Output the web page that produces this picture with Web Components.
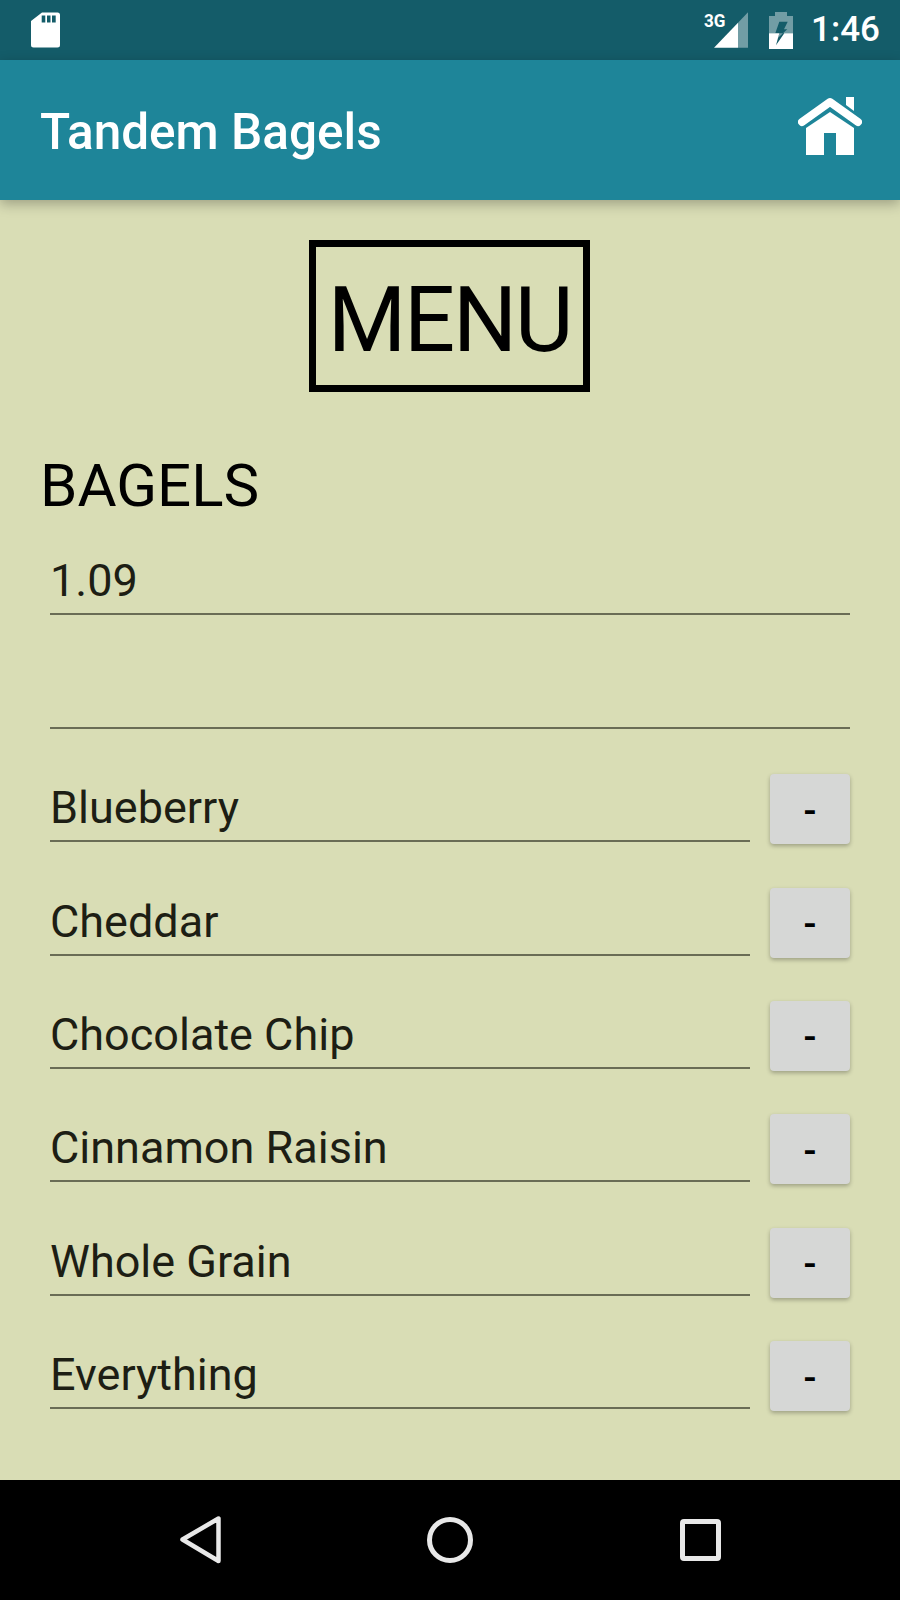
<!DOCTYPE html>
<html>
<head>
<meta charset="utf-8">
<style>
html, body { margin: 0; padding: 0; background: #d9ddb5; }
body { width: 900px; height: 1600px; overflow: hidden; font-family: Roboto, "Liberation Sans", sans-serif; display: flex; flex-direction: column; }
</style>
</head>
<body>
<status-bar></status-bar>
<app-toolbar>Tandem Bagels</app-toolbar>
<menu-page>
  <menu-title slot="title">MENU</menu-title>
  <section-title slot="title">BAGELS</section-title>
  <edit-line>1.09</edit-line>
  <edit-line></edit-line>
  <flavor-row>Blueberry</flavor-row>
  <flavor-row>Cheddar</flavor-row>
  <flavor-row>Chocolate Chip</flavor-row>
  <flavor-row>Cinnamon Raisin</flavor-row>
  <flavor-row>Whole Grain</flavor-row>
  <flavor-row>Everything</flavor-row>
</menu-page>
<nav-bar></nav-bar>

<script>
class StatusBar extends HTMLElement {
    constructor() {
        super();
        this.attachShadow({ mode: "open" });
        this.shadowRoot.innerHTML = `
            <style>
            :host { display: flex; flex: none; height: 60px; background: #145c69; align-items: center; color: #fff; font-family: Roboto, sans-serif; }
            svg { display: block; flex: none; }
            .sd { margin-left: 31px; }
            .right { margin-left: auto; display: flex; align-items: center; }
            .signal { position: relative; width: 44px; height: 36px; }
            .signal span { position: absolute; left: 0; top: -1px; font-size: 19px; line-height: 19px; font-weight: 700; transform: scaleX(0.9); transform-origin: 0 0; }
            .battery { margin-left: 21px; }
            .time { margin-left: 18px; margin-right: 20px; font-size: 35px; font-weight: 500; line-height: 62px; }
            </style>
            <svg class="sd" width="29" height="36" viewBox="0 0 29 36">
                <path fill="#fff" fill-rule="evenodd" d="M11 0.5H26.5A2.5 2.5 0 0 1 29 3V33A2.5 2.5 0 0 1 26.5 35.5H2.5A2.5 2.5 0 0 1 0 33V9L11 0.5ZM10.7 3.5V10.5H14.3V3.5ZM16 3.5V10.5H19.5V3.5ZM21 3.5V10.5H24.7V3.5Z"/>
            </svg>
            <div class="right">
                <div class="signal">
                    <span>3G</span>
                    <svg width="44" height="36" viewBox="0 0 44 36">
                        <path fill="#fff" fill-opacity="0.4" d="M44 0.3V35.7H34V10.7Z"/>
                        <path fill="#fff" d="M34 10.7V35.7H10Z"/>
                    </svg>
                </div>
                <svg class="battery" width="24" height="37" viewBox="0 0 24 37">
                    <path fill="#fff" fill-opacity="0.4" fill-rule="evenodd" d="M6 0H18V4H24V21.3H0V4H6ZM10.3 9.7L6.3 21.3H10.3L9.1 25.7L18.3 17.3H15L18.7 9.7Z"/>
                    <path fill="#fff" fill-rule="evenodd" d="M0 21.3H10.3L7 33.3L15.3 21.3H24V37H0Z"/>
                </svg>
                <div class="time">1:46</div>
            </div>
        `;
    }
}

class AppToolbar extends HTMLElement {
    constructor() {
        super();
        this.attachShadow({ mode: "open" });
        this.shadowRoot.innerHTML = `
            <style>
            :host { display: flex; flex: none; position: relative; z-index: 1; height: 140px; box-sizing: border-box; padding: 4px 38px 0 40px; align-items: center; justify-content: space-between; background: #1e8599; box-shadow: 0 4px 12px rgba(0,0,0,0.28); color: #fff; font-family: Roboto, sans-serif; font-size: 49.5px; font-weight: 500; }
            svg { display: block; margin-top: -12px; }
            </style>
            <slot></slot>
            <svg width="64" height="58" viewBox="0 0 64 58">
                <path fill="#fff" d="M48 0H56V14L48 8Z"/>
                <path fill="none" stroke="#fff" stroke-width="8" stroke-linecap="round" stroke-linejoin="round" d="M4 24L32 4L60 24" transform="translate(0,1)"/>
                <path fill="#fff" fill-rule="evenodd" d="M32 15L56 31V58H8V31ZM26 36V58H38V36Z"/>
            </svg>
        `;
    }
}

class MenuPage extends HTMLElement {
    constructor() {
        super();
        this.attachShadow({ mode: "open" });
        this.shadowRoot.innerHTML = `
            <style>
            :host { display: block; flex: 1; box-sizing: border-box; padding: 40px 50px 0 40px; background: #d9ddb5; }
            .rows { display: flex; flex-direction: column; gap: 53.4px; padding-left: 10px; }
            </style>
            <slot name="title"></slot>
            <div class="rows"><slot></slot></div>
        `;
    }
}

class MenuTitle extends HTMLElement {
    constructor() {
        super();
        this.attachShadow({ mode: "open" });
        this.shadowRoot.innerHTML = `
            <style>
            :host { display: block; width: 281px; height: 152px; box-sizing: border-box; margin: 0 0 0 269px; border: 7px solid #000; color: #000; font-family: Roboto, sans-serif; font-size: 90px; line-height: 148px; letter-spacing: -2.2px; text-align: center; white-space: nowrap; }
            </style>
            <slot></slot>
        `;
    }
}

class SectionTitle extends HTMLElement {
    constructor() {
        super();
        this.attachShadow({ mode: "open" });
        this.shadowRoot.innerHTML = `
            <style>
            :host { display: block; height: 105.4px; margin-top: 58px; color: #000; font-family: Roboto, sans-serif; font-size: 60px; line-height: 72px; }
            </style>
            <slot></slot>
        `;
    }
}

class EditLine extends HTMLElement {
    constructor() {
        super();
        this.attachShadow({ mode: "open" });
        this.shadowRoot.innerHTML = `
            <style>
            :host { display: block; height: 60px; box-sizing: border-box; border-bottom: 2px solid #6a6c55; color: #1d1e14; font-family: Roboto, sans-serif; font-size: 45px; line-height: 51px; white-space: nowrap; }
            </style>
            <slot></slot>
        `;
    }
}

class MinusButton extends HTMLElement {
    constructor() {
        super();
        this.attachShadow({ mode: "open" });
        this.shadowRoot.innerHTML = `
            <style>
            :host { display: flex; flex: none; width: 80px; height: 70px; box-sizing: border-box; padding-top: 3px; align-items: center; justify-content: center; background: #d6d7d6; border-radius: 4px; box-shadow: 0 2px 4px rgba(0,0,0,0.28); color: #000; font-family: Roboto, sans-serif; font-size: 38px; font-weight: 500; }
            </style>
            <slot></slot>
        `;
    }
}

class FlavorRow extends HTMLElement {
    constructor() {
        super();
        this.attachShadow({ mode: "open" });
        this.shadowRoot.innerHTML = `
            <style>
            :host { display: flex; align-items: flex-end; gap: 20px; height: 60px; }
            edit-line { flex: 1; }
            minus-button { margin-bottom: -2px; }
            </style>
            <edit-line><slot></slot></edit-line>
            <minus-button>-</minus-button>
        `;
    }
}

class NavBar extends HTMLElement {
    constructor() {
        super();
        this.attachShadow({ mode: "open" });
        this.shadowRoot.innerHTML = `
            <style>
            :host { display: flex; flex: none; height: 120px; background: #000; padding: 0 179px 0 180px; align-items: center; justify-content: space-between; }
            svg { display: block; }
            </style>
            <svg width="42" height="48" viewBox="0 0 42 48">
                <path fill="none" stroke="#e8e8e8" stroke-width="4.5" stroke-linejoin="round" d="M38.5 2.5V45L2.5 23.5Z"/>
            </svg>
            <svg width="46" height="46" viewBox="0 0 46 46" style="margin-left:-2px">
                <circle cx="23" cy="23" r="20.5" fill="none" stroke="#e8e8e8" stroke-width="5"/>
            </svg>
            <svg width="41" height="42" viewBox="0 0 41 42">
                <rect x="2.5" y="2.5" width="36" height="37" rx="1.5" fill="none" stroke="#e8e8e8" stroke-width="5"/>
            </svg>
        `;
    }
}

customElements.define('status-bar', StatusBar);
customElements.define('app-toolbar', AppToolbar);
customElements.define('menu-page', MenuPage);
customElements.define('menu-title', MenuTitle);
customElements.define('section-title', SectionTitle);
customElements.define('edit-line', EditLine);
customElements.define('minus-button', MinusButton);
customElements.define('flavor-row', FlavorRow);
customElements.define('nav-bar', NavBar);
</script>
</body>
</html>
